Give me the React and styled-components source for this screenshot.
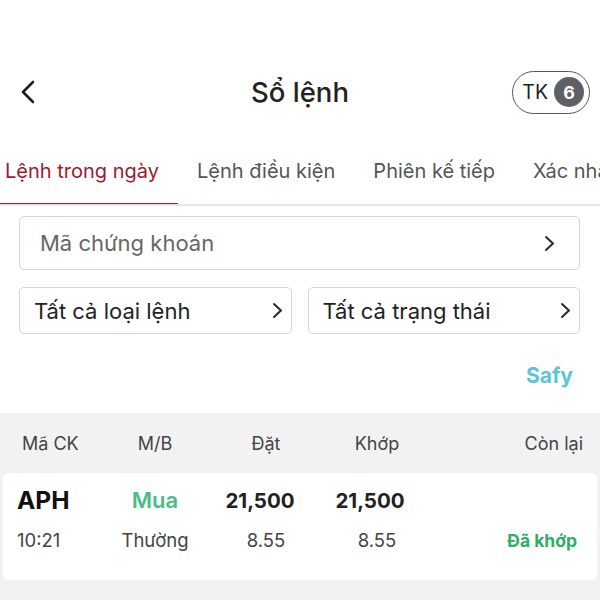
import React from "react";
import styled, { createGlobalStyle } from "styled-components";

const Global = createGlobalStyle`
  html, body { margin: 0; padding: 0; background: #fff; }
  body { font-family: Inter, Roboto, "Noto Sans", "Liberation Sans", sans-serif; color: #222; }
  * { box-sizing: border-box; }
`;

const Page = styled.div`
  width: 600px;
  height: 600px;
  overflow: hidden;
  display: flex;
  flex-direction: column;
  padding-top: 64px;
`;

const Header = styled.div`
  height: 56px;
  display: grid;
  grid-template-columns: 1fr auto 1fr;
  align-items: center;
  padding: 0 10px;
`;

const BackBtn = styled.div`
  display: flex;
  align-items: center;
  padding-left: 10px;
`;

const Title = styled.div`
  font-size: 27.5px;
  font-weight: 500;
  color: #222;
`;

const Pill = styled.div`
  justify-self: end;
  height: 43px;
  border: 1.5px solid #555;
  border-radius: 22px;
  display: flex;
  align-items: center;
  gap: 6px;
  padding: 0 5px 0 9px;
  font-size: 19.5px;
  color: #222;
`;

const Badge = styled.span`
  width: 30px;
  height: 30px;
  border-radius: 50%;
  background: #5f5f66;
  color: #fff;
  font-weight: 700;
  font-size: 18px;
  display: flex;
  align-items: center;
  justify-content: center;
`;

const TabBar = styled.div`
  padding-top: 39px;
  border-bottom: 2px solid #e6e6e6;
  display: flex;
  overflow: hidden;
`;

const TabRow = styled.div`
  display: flex;
  margin-left: -14px;
  margin-bottom: -2px;
`;

const Tab = styled.div`
  flex-shrink: 0;
  white-space: nowrap;
  padding: 0 19px 20px;
  line-height: 24px;
  font-size: 20px;
  color: ${(p) => (p.$active ? "#a3172f" : "#555")};
  border-bottom: 3px solid ${(p) => (p.$active ? "#a3172f" : "transparent")};
`;

const Filters = styled.div`
  padding: 10px 20px 0 19px;
  display: flex;
  flex-direction: column;
  gap: 17px;
`;

const Field = styled.div`
  height: ${(p) => p.$h}px;
  border: 1.5px solid #d4d4d4;
  border-radius: 5px;
  display: flex;
  align-items: center;
  justify-content: space-between;
  padding: 0 ${(p) => p.$pr}px 0 ${(p) => p.$pl}px;
  font-size: 22px;
  color: ${(p) => (p.$muted ? "#666" : "#222")};
`;

const SelectRow = styled.div`
  display: grid;
  grid-template-columns: 1fr 1fr;
  gap: 16px;
`;

const SafyRow = styled.div`
  height: 79px;
  display: flex;
  align-items: center;
  justify-content: flex-end;
  padding-right: 27px;
  padding-top: 4px;
`;

const Safy = styled.span`
  font-size: 21px;
  font-weight: 700;
  color: #5cc6d6;
`;

const Table = styled.div`
  flex: 1;
  background: #f2f2f2;
  display: flex;
  flex-direction: column;
`;

const Cols = styled.div`
  display: grid;
  grid-template-columns: ${(p) => p.$first}px 110px 112px 110px 1fr;
  align-items: center;
`;

const HeadRow = styled(Cols)`
  height: 60px;
  padding: 0 17px 0 22px;
  color: #444;
`;

const Card = styled.div`
  margin: 0 3px;
  background: #fff;
  border-radius: 6px;
  padding: 12px 20px 0 14px;
  height: 107px;
  display: flex;
  flex-direction: column;
  gap: 11px;
`;

const CardRow = styled(Cols)`
  height: ${(p) => p.$h}px;
`;

const Cell = styled.div`
  text-align: ${(p) => p.$align || "left"};
  white-space: nowrap;
  font-size: ${(p) => p.$size || 18.5}px;
  font-weight: ${(p) => p.$weight || 400};
  color: ${(p) => p.$color || "#444"};
  padding-right: ${(p) => p.$shift || 0}px;
`;

const Chevron = ({ w = 9, h = 15, sw = 2 }) => (
  <svg width={w + 2} height={h + 2} viewBox={`-1 -1 ${w + 2} ${h + 2}`} fill="none">
    <path d={`M1 1 L${w - 1} ${h / 2} L1 ${h - 1}`} stroke="#2a2a2a" strokeWidth={sw} strokeLinecap="round" strokeLinejoin="round" />
  </svg>
);

export default function App() {
  return (
    <>
      <Global />
      <Page>
        <Header>
          <BackBtn>
            <svg width="16" height="24" viewBox="0 0 16 24" fill="none">
              <path d="M13 2 L3 12 L13 22" stroke="#1e1e1e" strokeWidth="2.6" strokeLinecap="round" strokeLinejoin="round" />
            </svg>
          </BackBtn>
          <Title>Sổ lệnh</Title>
          <Pill>
            TK <Badge>6</Badge>
          </Pill>
        </Header>
        <TabBar>
          <TabRow>
            <Tab $active>Lệnh trong ngày</Tab>
            <Tab>Lệnh điều kiện</Tab>
            <Tab>Phiên kế tiếp</Tab>
            <Tab>Xác nhận lệnh</Tab>
          </TabRow>
        </TabBar>
        <Filters>
          <Field $h={54} $pl={20} $pr={24} $muted>
            Mã chứng khoán
            <Chevron />
          </Field>
          <SelectRow>
            <Field $h={47} $pl={14} $pr={8}>
              Tất cả loại lệnh
              <Chevron />
            </Field>
            <Field $h={47} $pl={14} $pr={8}>
              Tất cả trạng thái
              <Chevron />
            </Field>
          </SelectRow>
        </Filters>
        <SafyRow>
          <Safy>Safy</Safy>
        </SafyRow>
        <Table>
          <HeadRow $first={78}>
            <Cell $size={18}>Mã CK</Cell>
            <Cell $size={18} $align="center">M/B</Cell>
            <Cell $size={18} $align="center">Đặt</Cell>
            <Cell $size={18} $align="center">Khớp</Cell>
            <Cell $size={18} $align="right">Còn lại</Cell>
          </HeadRow>
          <Card>
            <CardRow $first={83} $h={30}>
              <Cell $size={24.5} $weight={700} $color="#111">APH</Cell>
              <Cell $size={22} $weight={600} $color="#48bd85" $align="center">Mua</Cell>
              <Cell $size={20.5} $weight={700} $color="#222" $align="center" $shift={12}>21,500</Cell>
              <Cell $size={20.5} $weight={700} $color="#222" $align="center" $shift={14}>21,500</Cell>
              <Cell />
            </CardRow>
            <CardRow $first={83} $h={28}>
              <Cell>10:21</Cell>
              <Cell $align="center">Thường</Cell>
              <Cell $align="center">8.55</Cell>
              <Cell $align="center">8.55</Cell>
              <Cell $align="right" $size={17.5} $weight={700} $color="#2eae66">Đã khớp</Cell>
            </CardRow>
          </Card>
        </Table>
      </Page>
    </>
  );
}
